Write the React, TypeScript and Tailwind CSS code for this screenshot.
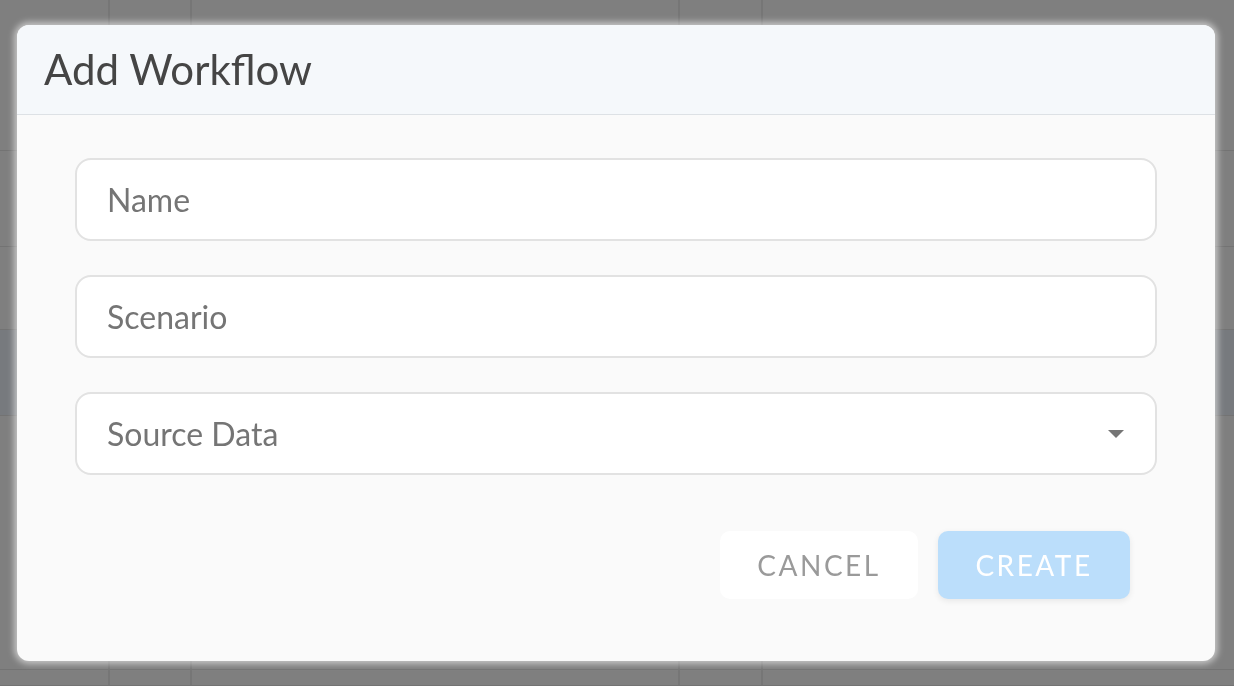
import React from 'react';

const ROWS = [
  { h: 'h-[151px]', selected: false },
  { h: 'h-[96px]', selected: false },
  { h: 'h-[83px]', selected: false },
  { h: 'h-[86px]', selected: true },
  { h: 'h-[254px]', selected: false },
  { h: 'h-[16px]', selected: false },
];

function Backdrop() {
  return (
    <div className="h-[686px] w-full overflow-hidden bg-[#7f7f7f]">
      {ROWS.map((row, i) => (
        <div
          key={i}
          className={`flex ${row.h} border-b border-[#737373] ${row.selected ? 'bg-[#777a7e]' : ''}`}
        >
          <div className="w-[110px] border-r-2 border-[#767676]" />
          <div className="w-[82px] border-r-2 border-[#767676]" />
          <div className="w-[488px] border-r-2 border-[#767676]" />
          <div className="w-[83px] border-r-2 border-[#767676]" />
          <div className="flex-1" />
        </div>
      ))}
    </div>
  );
}

function TextField({ label, select }: { label: string; select?: boolean }) {
  return (
    <div className="flex h-[83px] items-center justify-between rounded-[16px] border-2 border-[#e2e2e2] bg-white pl-[30px] pr-[31px]">
      <span className="text-[32px] text-[#757575]">{label}</span>
      {select && (
        <svg width="16" height="8" viewBox="0 0 16 8">
          <path d="M0 0 L16 0 L8 8 Z" fill="#757575" />
        </svg>
      )}
    </div>
  );
}

export default function App() {
  return (
    <div className="relative font-[Lato,sans-serif]">
      <Backdrop />

      {/* Dialog */}
      <div className="fixed inset-0 flex items-center justify-center pr-[2px]">
        <div className="w-[1198px] overflow-hidden rounded-[12px] bg-[#fafafa] shadow-[0_0_6px_3px_rgba(255,255,255,0.55)]">
          <div className="flex h-[90px] items-center border-b border-[#dde1e5] bg-[#f5f8fb] px-[27px]">
            <h2 className="text-[42px] text-[#454545]">Add Workflow</h2>
          </div>

          <div className="px-[58px] pt-[43px] pb-[62px]">
            <div className="flex flex-col gap-[34px]">
              <TextField label="Name" />
              <TextField label="Scenario" />
              <TextField label="Source Data" select />
            </div>

            <div className="mt-[56px] flex justify-end gap-[20px] pr-[27px]">
              <button className="h-[68px] w-[198px] rounded-[10px] bg-white text-[28px] tracking-[0.09em] text-[#9a9a9a]">
                CANCEL
              </button>
              <button className="h-[68px] w-[192px] rounded-[10px] bg-[#bbdefb] text-[28px] tracking-[0.09em] text-white shadow-[0_2px_6px_rgba(0,0,0,0.08)]">
                CREATE
              </button>
            </div>
          </div>
        </div>
      </div>
    </div>
  );
}
